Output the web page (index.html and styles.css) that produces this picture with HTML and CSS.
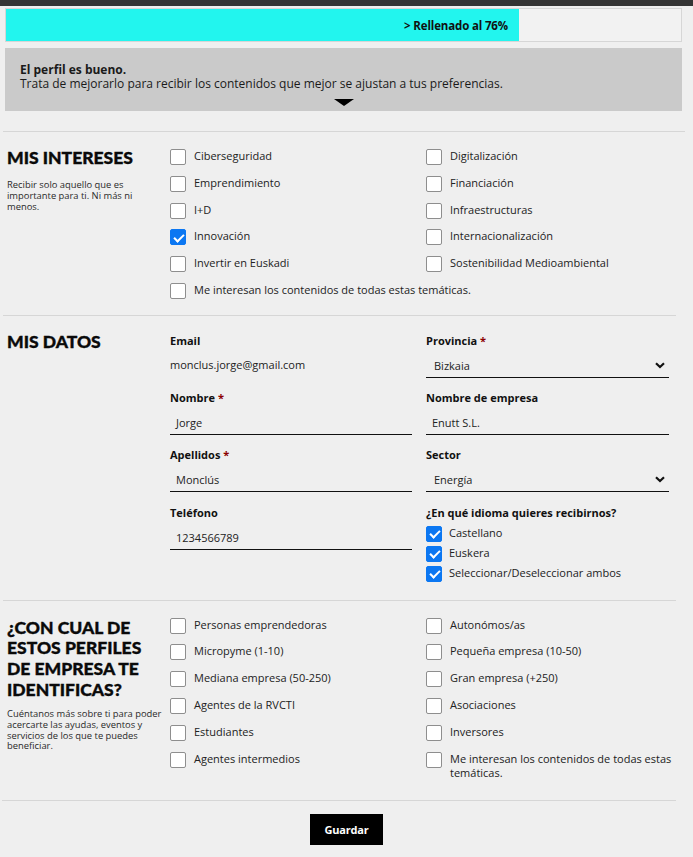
FILE: index.html
```html
<!DOCTYPE html>
<html lang="es">
<head>
<meta charset="utf-8">
<title>Perfil</title>
<link rel="stylesheet" href="styles.css">
</head>
<body>
<div class="topbar"></div>
<div class="page">
  <div class="progress"><div class="progress-fill" style="width:76%"><span>&gt; Rellenado al 76%</span></div></div>
  <div class="notice">
    <p><b>El perfil es bueno.</b><br>Trata de mejorarlo para recibir los contenidos que mejor se ajustan a tus preferencias.</p>
    <span class="caret"></span>
  </div>

  <hr class="divider divider-wide">

  <section class="sec">
    <div class="side">
      <h2>MIS INTERESES</h2>
      <p>Recibir solo aquello que es importante para ti. Ni más ni menos.</p>
    </div>
    <div class="checks">
      <label class="chk"><input type="checkbox"><span>Ciberseguridad</span></label>
      <label class="chk"><input type="checkbox"><span>Digitalización</span></label>
      <label class="chk"><input type="checkbox"><span>Emprendimiento</span></label>
      <label class="chk"><input type="checkbox"><span>Financiación</span></label>
      <label class="chk"><input type="checkbox"><span>I+D</span></label>
      <label class="chk"><input type="checkbox"><span>Infraestructuras</span></label>
      <label class="chk"><input type="checkbox" checked><span>Innovación</span></label>
      <label class="chk"><input type="checkbox"><span>Internacionalización</span></label>
      <label class="chk"><input type="checkbox"><span>Invertir en Euskadi</span></label>
      <label class="chk"><input type="checkbox"><span>Sostenibilidad Medioambiental</span></label>
      <label class="chk chk-full"><input type="checkbox"><span>Me interesan los contenidos de todas estas temáticas.</span></label>
    </div>
  </section>

  <hr class="divider">

  <section class="sec sec-data">
    <div class="side">
      <h2>MIS DATOS</h2>
    </div>
    <div class="fields">
      <div class="col">
        <div class="field">
          <div class="flabel">Email</div>
          <div class="static">monclus.jorge@gmail.com</div>
        </div>
        <div class="field">
          <div class="flabel">Nombre <em>*</em></div>
          <div class="input">Jorge</div>
        </div>
        <div class="field">
          <div class="flabel">Apellidos <em>*</em></div>
          <div class="input">Monclús</div>
        </div>
        <div class="field">
          <div class="flabel">Teléfono</div>
          <div class="input">1234566789</div>
        </div>
      </div>
      <div class="col">
        <div class="field">
          <div class="flabel">Provincia <em>*</em></div>
          <div class="input select">Bizkaia<svg class="chev" viewBox="0 0 10 7" width="10" height="7"><path d="M1 1.2 L5 5 L9 1.2" fill="none" stroke="#111" stroke-width="2.2"/></svg></div>
        </div>
        <div class="field">
          <div class="flabel">Nombre de empresa</div>
          <div class="input">Enutt S.L.</div>
        </div>
        <div class="field">
          <div class="flabel">Sector</div>
          <div class="input select">Energía<svg class="chev" viewBox="0 0 10 7" width="10" height="7"><path d="M1 1.2 L5 5 L9 1.2" fill="none" stroke="#111" stroke-width="2.2"/></svg></div>
        </div>
        <div class="field">
          <div class="flabel">¿En qué idioma quieres recibirnos?</div>
          <div class="langs">
            <label class="chk"><input type="checkbox" checked><span>Castellano</span></label>
            <label class="chk"><input type="checkbox" checked><span>Euskera</span></label>
            <label class="chk"><input type="checkbox" checked><span>Seleccionar/Deseleccionar ambos</span></label>
          </div>
        </div>
      </div>
    </div>
  </section>

  <hr class="divider">

  <section class="sec sec-profiles">
    <div class="side">
      <h2>¿CON CUAL DE ESTOS PERFILES DE EMPRESA TE IDENTIFICAS?</h2>
      <p>Cuéntanos más sobre ti para poder acercarte las ayudas, eventos y servicios de los que te puedes beneficiar.</p>
    </div>
    <div class="checks">
      <label class="chk"><input type="checkbox"><span>Personas emprendedoras</span></label>
      <label class="chk"><input type="checkbox"><span>Autonómos/as</span></label>
      <label class="chk"><input type="checkbox"><span>Micropyme (1-10)</span></label>
      <label class="chk"><input type="checkbox"><span>Pequeña empresa (10-50)</span></label>
      <label class="chk"><input type="checkbox"><span>Mediana empresa (50-250)</span></label>
      <label class="chk"><input type="checkbox"><span>Gran empresa (+250)</span></label>
      <label class="chk"><input type="checkbox"><span>Agentes de la RVCTI</span></label>
      <label class="chk"><input type="checkbox"><span>Asociaciones</span></label>
      <label class="chk"><input type="checkbox"><span>Estudiantes</span></label>
      <label class="chk"><input type="checkbox"><span>Inversores</span></label>
      <label class="chk"><input type="checkbox"><span>Agentes intermedios</span></label>
      <label class="chk"><input type="checkbox"><span>Me interesan los contenidos de todas estas temáticas.</span></label>
    </div>
  </section>

  <hr class="divider divider-bottom">

  <div class="actions">
    <button class="btn" type="button">Guardar</button>
  </div>
</div>
</body>
</html>
```

FILE: styles.css
```css
* { box-sizing: border-box; }

html, body {
  margin: 0;
  padding: 0;
  background: #efefef;
}

body {
  font-family: "Open Sans", "Liberation Sans", sans-serif;
  font-size: 11px;
  color: #1e1e1e;
}

.topbar {
  height: 6px;
  background: #343434;
}

.page {
  padding: 2px 11px 20px 5px;
}

.progress {
  height: 34px;
  border: 1px solid #d6d6d6;
  background: #f2f2f2;
}

.progress-fill {
  height: 100%;
  background: #22f5ee;
  display: flex;
  align-items: center;
  justify-content: flex-end;
  padding-right: 11px;
}

.progress-fill span {
  font-weight: 700;
  font-size: 11.5px;
  letter-spacing: -0.15px;
  color: #111;
}

.notice {
  margin-top: 6px;
  background: #cacaca;
  padding: 15px 15px 5px;
  display: flex;
  flex-direction: column;
  align-items: center;
}

.notice p {
  margin: 0;
  align-self: stretch;
  font-size: 12px;
  line-height: 14px;
  color: #1a1a1a;
}

.notice b {
  font-weight: 700;
}

.caret {
  margin-top: 8px;
  width: 0;
  height: 0;
  border-left: 10px solid transparent;
  border-right: 10px solid transparent;
  border-top: 7px solid #000;
}

.divider {
  border: 0;
  border-top: 1px solid #d6d6d6;
  margin: 0 6px 0 -2px;
}

.divider-wide {
  margin-top: 20px;
  margin-right: -3px;
}

.divider-bottom {
  margin-left: -3px;
}

.sec {
  display: flex;
  padding: 16px 0 16px 2px;
}

.side {
  width: 163px;
  flex-shrink: 0;
  padding-right: 6px;
}

.side h2 {
  margin: 0;
  font-family: "Lato", "Open Sans", sans-serif;
  font-weight: 900;
  font-size: 17.5px;
  line-height: 20.7px;
  color: #0a0a0a;
  -webkit-text-stroke: 0.35px #0a0a0a;
}

.side p {
  margin: 10px 0 0;
  font-size: 9.4px;
  line-height: 11px;
  color: #2a2a2a;
}

.checks {
  flex: 1;
  display: grid;
  grid-template-columns: 256px 1fr;
  row-gap: 10.8px;
  padding-top: 1px;
}

.chk {
  display: flex;
  align-items: flex-start;
  gap: 8px;
  line-height: 14px;
  color: #222;
}

.chk-full {
  grid-column: 1 / -1;
}

.chk input {
  appearance: none;
  -webkit-appearance: none;
  margin: 0;
  width: 16px;
  height: 16px;
  flex-shrink: 0;
  border: 1px solid #8e8e8e;
  border-radius: 2px;
  background: #fff;
  position: relative;
}

.chk input:checked {
  background: #0b77f2;
  border-color: #0b77f2;
}

.chk input:checked::after {
  content: "";
  position: absolute;
  left: 5px;
  top: 1.5px;
  width: 4px;
  height: 8px;
  border: solid #fff;
  border-width: 0 2.5px 2.5px 0;
  transform: rotate(45deg);
}

.sec-data {
  padding-bottom: 18px;
}

.fields {
  flex: 1;
  display: grid;
  grid-template-columns: 242px 243px;
  column-gap: 14px;
  padding-top: 2px;
}

.field {
  margin-bottom: 13.2px;
}

.field:last-child {
  margin-bottom: 0;
}

.flabel {
  font-weight: 700;
  line-height: 14px;
  color: #111;
  margin-bottom: 3px;
}

.flabel em {
  font-style: normal;
  color: #8b0000;
}

.static {
  padding-top: 7px;
  height: 27px;
  line-height: 14px;
  color: #222;
}

.input {
  height: 27px;
  padding: 3px 6px 0;
  border-bottom: 1.5px solid #111;
  color: #222;
  display: flex;
  align-items: center;
}

.select {
  padding-left: 8px;
  justify-content: space-between;
  padding-right: 4px;
}

.langs {
  display: flex;
  flex-direction: column;
  gap: 4px;
  padding-top: 3px;
}

.langs .chk {
  gap: 7px;
}

.sec-profiles .side p {
  margin-top: 9px;
  line-height: 10.7px;
}

.sec-profiles {
  padding-top: 17px;
  padding-bottom: 20px;
}

.sec-profiles .checks {
  padding-top: 0;
}

.actions {
  display: flex;
  justify-content: center;
  padding-top: 13px;
  padding-left: 6px;
}

.btn {
  background: #000;
  color: #fff;
  border: 0;
  font-family: "Open Sans", "Liberation Sans", sans-serif;
  font-weight: 700;
  font-size: 11px;
  letter-spacing: -0.2px;
  width: 73px;
  height: 31px;
  cursor: pointer;
}
```
